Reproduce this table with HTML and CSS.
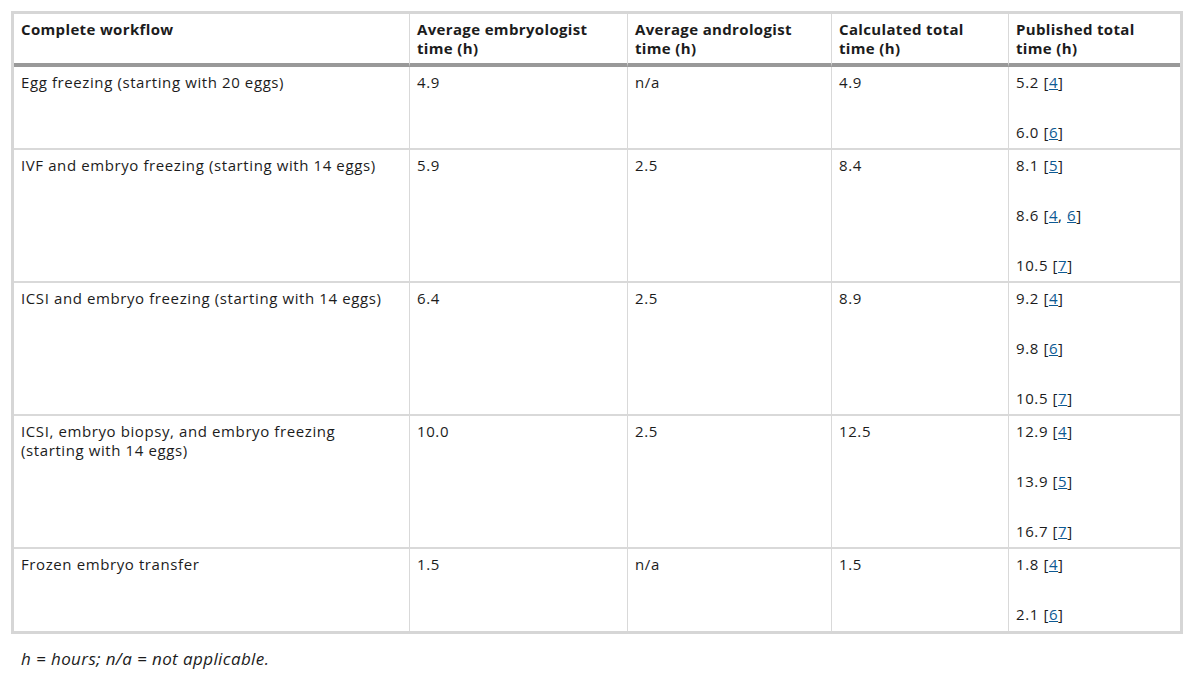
FILE: index.html
```html
<!DOCTYPE html>
<html>
<head>
<meta charset="utf-8">
<link rel="stylesheet" href="styles.css">
</head>
<body>
<div class="wrap">
<table class="tbl">
<colgroup>
<col class="c1"><col class="c2"><col class="c3"><col class="c4"><col class="c5">
</colgroup>
<thead>
<tr>
<th>Complete workflow</th>
<th>Average embryologist time (h)</th>
<th>Average andrologist time (h)</th>
<th>Calculated total time (h)</th>
<th>Published total time (h)</th>
</tr>
</thead>
<tbody>
<tr>
<td>Egg freezing (starting with 20 eggs)</td>
<td>4.9</td>
<td>n/a</td>
<td>4.9</td>
<td><p>5.2 [<a href="#">4</a>]</p><p>6.0 [<a href="#">6</a>]</p></td>
</tr>
<tr>
<td>IVF and embryo freezing (starting with 14 eggs)</td>
<td>5.9</td>
<td>2.5</td>
<td>8.4</td>
<td><p>8.1 [<a href="#">5</a>]</p><p>8.6 [<a href="#">4</a>, <a href="#">6</a>]</p><p>10.5 [<a href="#">7</a>]</p></td>
</tr>
<tr>
<td>ICSI and embryo freezing (starting with 14 eggs)</td>
<td>6.4</td>
<td>2.5</td>
<td>8.9</td>
<td><p>9.2 [<a href="#">4</a>]</p><p>9.8 [<a href="#">6</a>]</p><p>10.5 [<a href="#">7</a>]</p></td>
</tr>
<tr>
<td>ICSI, embryo biopsy, and embryo freezing (starting with 14 eggs)</td>
<td>10.0</td>
<td>2.5</td>
<td>12.5</td>
<td><p>12.9 [<a href="#">4</a>]</p><p>13.9 [<a href="#">5</a>]</p><p>16.7 [<a href="#">7</a>]</p></td>
</tr>
<tr>
<td>Frozen embryo transfer</td>
<td>1.5</td>
<td>n/a</td>
<td>1.5</td>
<td><p>1.8 [<a href="#">4</a>]</p><p>2.1 [<a href="#">6</a>]</p></td>
</tr>
</tbody>
</table>
<p class="note">h = hours; n/a = not applicable.</p>
</div>
</body>
</html>
```
FILE: styles.css
```css
html, body {
  margin: 0;
  padding: 0;
  background: #fff;
}
body {
  font-family: "Open Sans", "Noto Sans", sans-serif;
  font-size: 15px;
  color: #1c1c1c;
}
.wrap {
  padding: 11px;
}
.tbl {
  width: 1172px;
  border-collapse: separate;
  border-spacing: 0;
  border: 3px solid #d6d6d6;
  table-layout: fixed;
}
.c1 { width: 395px; }
.c2 { width: 218px; }
.c3 { width: 204px; }
.c4 { width: 177px; }
.c5 { width: 172px; }
.tbl th, .tbl td {
  text-align: left;
  vertical-align: top;
  line-height: 19px;
  border-left: 1px solid #d9d9d9;
}
.tbl th:first-child, .tbl td:first-child {
  border-left: none;
}
.tbl th {
  font-weight: 700;
  letter-spacing: 0.35px;
  padding: 6px 7px 5px 7px;
  border-bottom: 4px solid #999;
}
.tbl td {
  letter-spacing: 0.6px;
  padding: 6px 7px 6px 7px;
  border-top: 2px solid #d9d9d9;
}
.tbl tbody tr:first-child td {
  border-top: none;
}
.tbl tbody tr:last-child td {
  padding-bottom: 7px;
}
.tbl p {
  margin: 0 0 31px 0;
}
.tbl p:last-child {
  margin-bottom: 0;
}
.tbl a {
  color: #0d5a94;
  text-decoration: underline;
}
.note {
  font-style: italic;
  font-size: 17px;
  letter-spacing: 0.4px;
  margin: 15px 0 0 10px;
  line-height: 20px;
}
```
